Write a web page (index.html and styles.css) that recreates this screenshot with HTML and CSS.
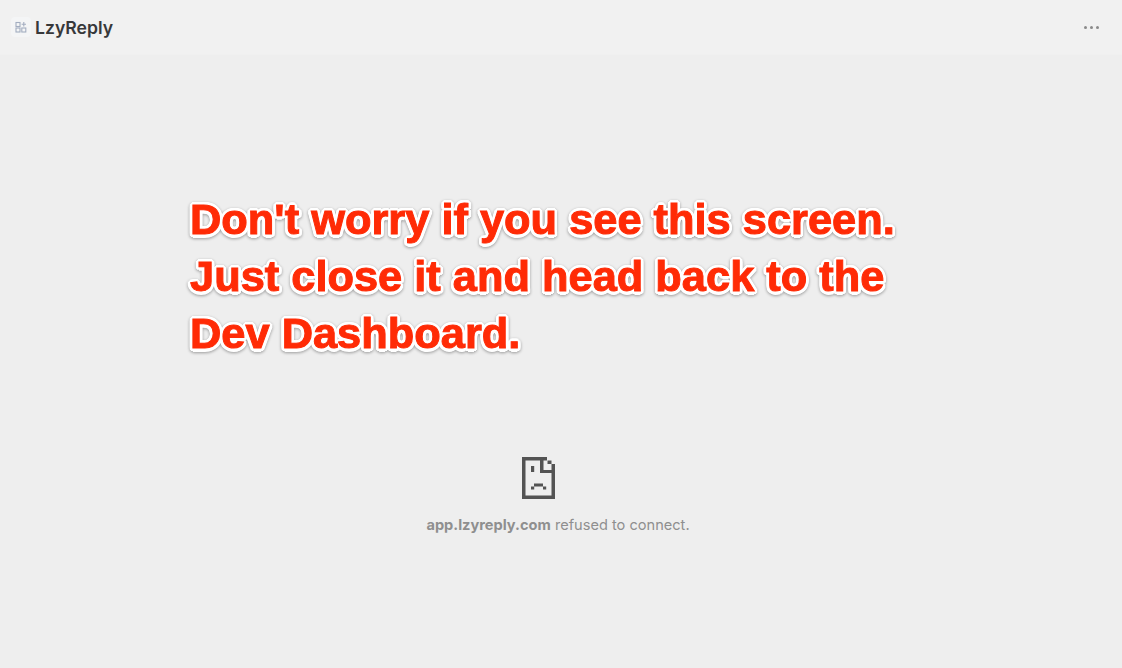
FILE: index.html
```html
<!DOCTYPE html>
<html lang="en">
<head>
    <meta charset="UTF-8">
    <title>LzyReply</title>
    <link rel="stylesheet" href="styles.css">
</head>
<body>
    <header class="topbar">
        <div class="brand">
            <span class="app-icon">
                <svg width="12" height="12" viewBox="0 0 12 12" fill="none" stroke="#a3adc0" stroke-width="1.1">
                    <rect x="1" y="1.5" width="4" height="4"/>
                    <rect x="1" y="7" width="4" height="4"/>
                    <rect x="6.8" y="7" width="4" height="4"/>
                    <path d="M8.8 1v4.4M6.6 3.2h4.4"/>
                </svg>
            </span>
            <span class="app-name">LzyReply</span>
        </div>
        <div class="more">
            <span></span><span></span><span></span>
        </div>
    </header>

    <main class="frame">
        <svg class="sad-file" width="34" height="42" viewBox="0 0 34 42" fill="#535353">
            <!-- outline -->
            <rect x="0" y="0" width="3.5" height="42"/>
            <rect x="0" y="0" width="25" height="3.5"/>
            <rect x="0" y="38.5" width="33" height="3.5"/>
            <rect x="29.5" y="7" width="3.5" height="35"/>
            <!-- folded corner -->
            <rect x="18" y="0" width="3.5" height="16"/>
            <rect x="18" y="13" width="15" height="3"/>
            <rect x="25.5" y="3.5" width="4" height="3.5"/>
            <!-- face -->
            <rect x="9" y="9" width="3.2" height="6"/>
            <rect x="12" y="26.5" width="9" height="3"/>
            <rect x="9" y="29.5" width="3.2" height="3"/>
            <rect x="21" y="29.5" width="3.2" height="3"/>
        </svg>
        <p class="error-text"><b>app.lzyreply.com</b> refused to connect.</p>
    </main>

    <div class="note">Don't worry if you see this screen.<br>Just close it and head back to the<br>Dev Dashboard.</div>
</body>
</html>
```

FILE: styles.css
```css
* {
    box-sizing: border-box;
}
html, body {
    height: 100%;
}
body {
    margin: 0;
    font-family: "Liberation Sans", Arial, sans-serif;
    background-color: #eeeeee;
    display: flex;
    flex-direction: column;
    overflow: hidden;
}
.topbar {
    height: 55px;
    flex: none;
    display: flex;
    align-items: center;
    justify-content: space-between;
    padding: 0 23px 0 11px;
    background-color: #f1f1f1;
    border-bottom: 1px solid #f0f0f0;
}
.brand {
    display: flex;
    align-items: center;
    gap: 4px;
}
.app-icon {
    width: 20px;
    height: 20px;
    display: flex;
    align-items: center;
    justify-content: center;
    background-color: #f4f5f6;
    border-radius: 4px;
}
.app-name {
    font-family: Inter, sans-serif;
    font-size: 17.6px;
    font-weight: 600;
    color: #37383a;
}
.more {
    display: flex;
    gap: 3px;
}
.more span {
    width: 3px;
    height: 3px;
    border-radius: 50%;
    background-color: #8a8a8a;
}
.frame {
    flex: 1;
    display: flex;
    flex-direction: column;
    align-items: center;
    padding: 402px 6px 0 0;
}
.sad-file {
    display: block;
    margin-right: 39px;
}
.error-text {
    margin: 17px 0 0;
    font-family: Inter, sans-serif;
    font-size: 14.6px;
    color: #8f8f8f;
}
.error-text b {
    font-weight: 700;
}
/* annotation pasted over the screenshot */
.note {
    position: absolute;
    left: 190px;
    top: 191px;
    font-size: 43.4px;
    line-height: 57px;
    font-weight: 700;
    white-space: nowrap;
    color: #ff2b06;
    -webkit-text-stroke: 1px #ff2b06;
    text-shadow: 3px 0 0 #fff, -3px 0 0 #fff, 0 4px 0 #fff, 0 -3px 0 #fff,
        3px 2px 0 #fff, -3px 2px 0 #fff, 2px -2px 0 #fff, -2px -2px 0 #fff,
        3px 1px 0 #fff, -3px 1px 0 #fff, 3px -1px 0 #fff, -3px -1px 0 #fff,
        2px 3px 0 #fff, -2px 3px 0 #fff, 1px -3px 0 #fff, -1px -3px 0 #fff;
    filter: drop-shadow(0 1px 1.5px rgba(0, 0, 0, 0.35));
}
```
